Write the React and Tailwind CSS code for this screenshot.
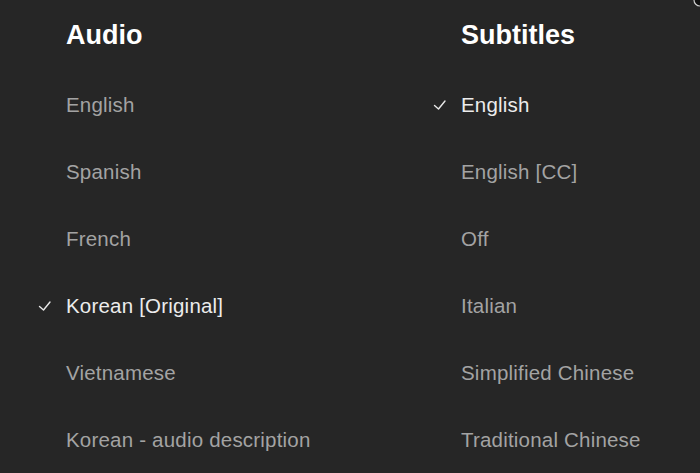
const audio = [
  { label: 'English' },
  { label: 'Spanish' },
  { label: 'French' },
  { label: 'Korean [Original]', selected: true },
  { label: 'Vietnamese' },
  { label: 'Korean - audio description' },
];

const subtitles = [
  { label: 'English', selected: true },
  { label: 'English [CC]' },
  { label: 'Off' },
  { label: 'Italian' },
  { label: 'Simplified Chinese' },
  { label: 'Traditional Chinese' },
];

function Check() {
  return (
    <svg width="28" height="20" viewBox="0 0 28 20" className="shrink-0">
      <path d="M1.5 10.5 L5.5 14 L12 6" fill="none" stroke="#e8e8e8" strokeWidth="1.4" strokeLinecap="round" strokeLinejoin="round" />
    </svg>
  );
}

function Column({ title, items }) {
  return (
    <div className="flex flex-col">
      <div className="flex h-[71px] items-center pl-7 pb-[1px]">
        <h2 className="text-[27px] font-bold leading-none text-white">{title}</h2>
      </div>
      {items.map((item) => (
        <div key={item.label} className="flex h-[67px] items-center pt-[1px]">
          {item.selected ? <Check /> : <div className="w-7 shrink-0" />}
          <span className={`text-[20.5px] leading-none tracking-[0.2px] ${item.selected ? 'text-[#ececec]' : 'text-[#a3a3a3]'}`}>
            {item.label}
          </span>
        </div>
      ))}
    </div>
  );
}

export default function App() {
  return (
    <div
      className="relative h-[473px] w-[700px] overflow-hidden bg-[#262626]"
      style={{ fontFamily: '"Liberation Sans", Arial, sans-serif' }}
    >
      <div className="grid grid-cols-[395px_1fr] pl-[38px]">
        <Column title="Audio" items={audio} />
        <Column title="Subtitles" items={subtitles} />
      </div>
      <svg width="14" height="14" viewBox="0 0 14 14" className="absolute -right-[7px] -top-[7px]">
        <circle cx="7" cy="7" r="6" fill="#111" stroke="#cfcfcf" strokeWidth="1.2" />
      </svg>
    </div>
  );
}
